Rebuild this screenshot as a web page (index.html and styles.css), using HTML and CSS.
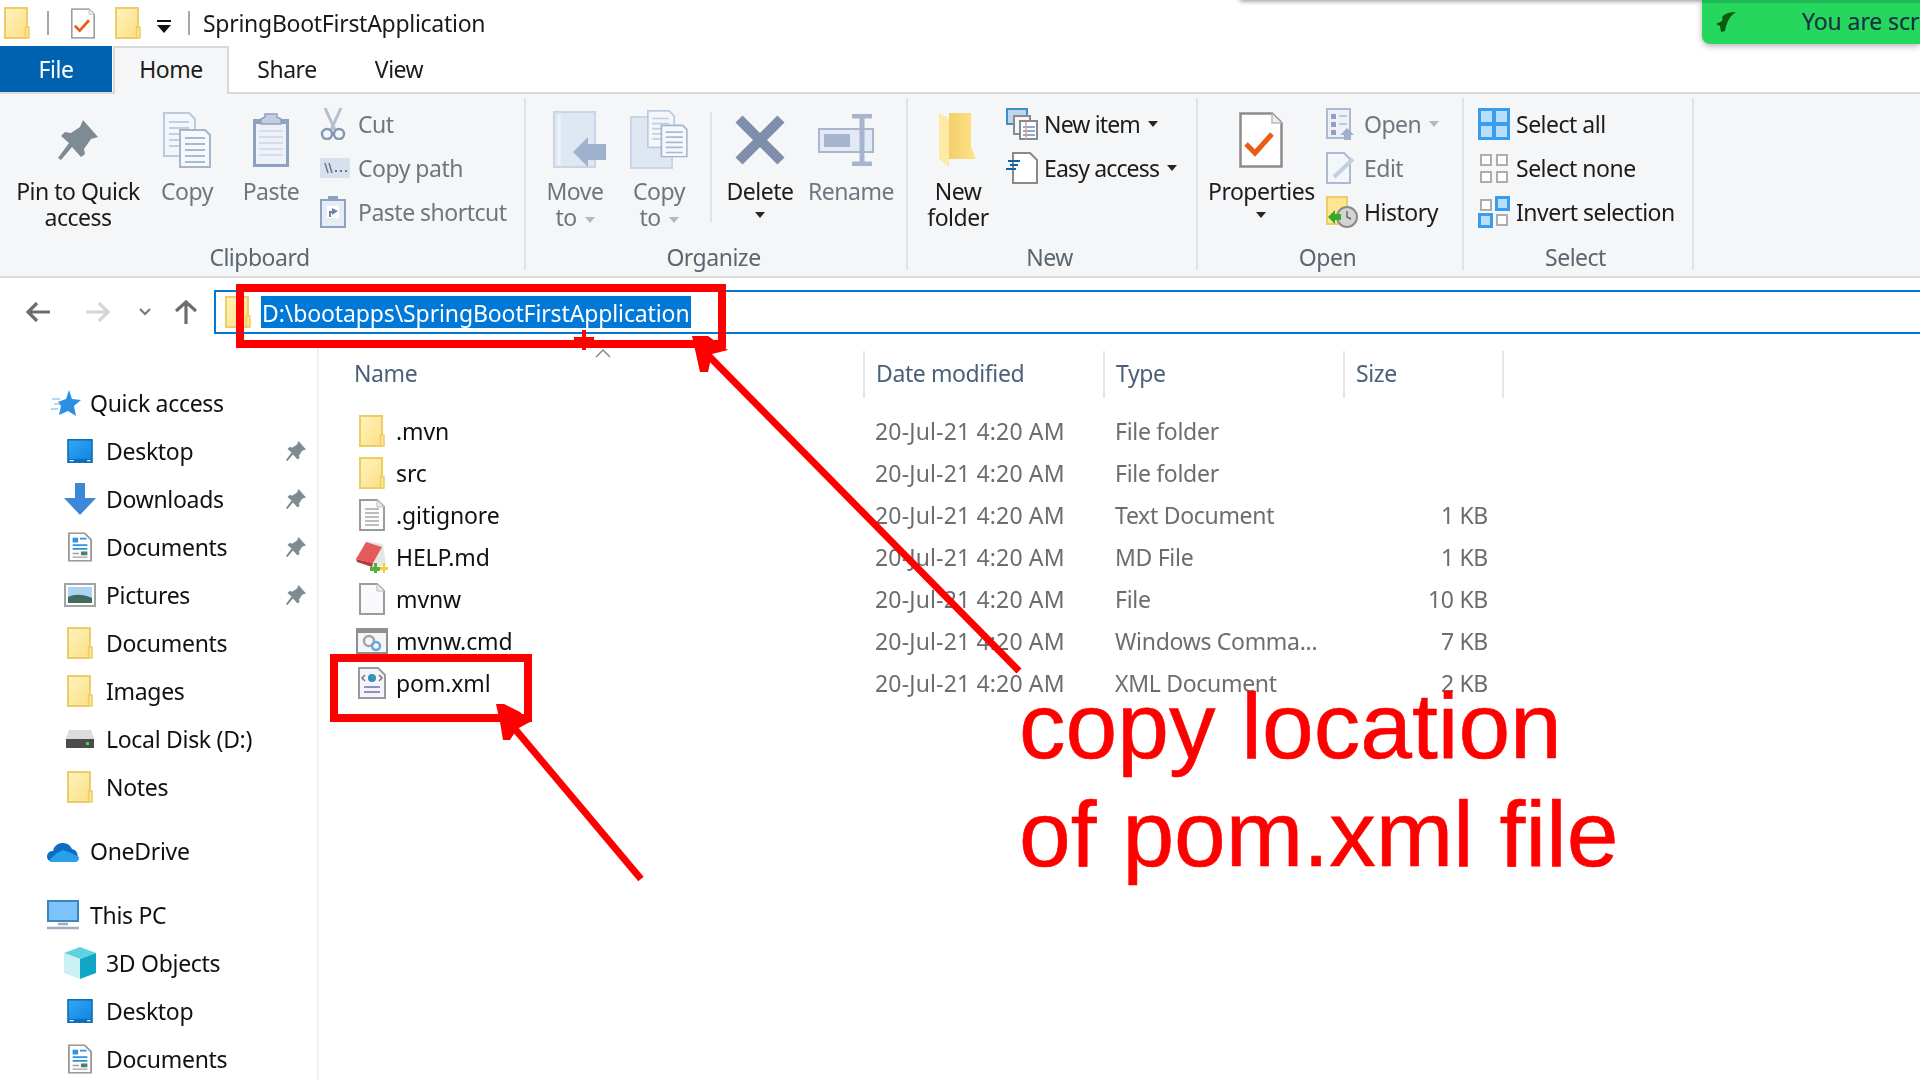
FILE: index.html
```html
<!DOCTYPE html>
<html lang="en">
<head>
<meta charset="utf-8">
<title>SpringBootFirstApplication</title>
<link rel="stylesheet" href="styles.css">
</head>
<body>
<svg class="defs" width="0" height="0" aria-hidden="true">
  <defs>
    <linearGradient id="fy" x1="0" y1="0" x2="1" y2="1"><stop offset="0" stop-color="#fff3bd"/><stop offset="1" stop-color="#fbdf84"/></linearGradient>
    <linearGradient id="fo" x1="0" y1="0" x2="1" y2="0"><stop offset="0" stop-color="#f3cf6b"/><stop offset="1" stop-color="#ffe28a"/></linearGradient>
    <linearGradient id="dk" x1="0" y1="0" x2="1" y2="1"><stop offset="0" stop-color="#35a5f5"/><stop offset="1" stop-color="#0f86e0"/></linearGradient>
    <symbol id="folder" viewBox="0 0 26 32"><rect x="1" y="1" width="22" height="30" fill="url(#fy)" stroke="#edcd66" stroke-width="2"/><rect x="21.5" y="20" width="3.5" height="11" fill="#fde592" stroke="#edcd66" stroke-width="1.5"/></symbol>
    <symbol id="pin" viewBox="0 0 40 40"><path d="M25 0L40 17 33 19 26 29 27 34 23 37 14 27 3 40 0 38 11 23 3 16 7 12 13 13 22 7Z" fill="#7e8b93"/></symbol>
    <symbol id="check" viewBox="0 0 44 56"><path d="M1.5 1.5H33L42.5 11V54.5H1.5Z" fill="#fff" stroke="#8c8c8c" stroke-width="2.5"/><path d="M33 1.5V11H42.5" fill="#eee" stroke="#bbb" stroke-width="1.5"/><path d="M7 32L16 41 33 22" fill="none" stroke="#ea5b14" stroke-width="5"/></symbol>
    <symbol id="pagelines" viewBox="0 0 26 32"><path d="M1 1H18L25 8V31H1Z" fill="#fdfdfd" stroke="#9b9b9b" stroke-width="2"/><path d="M18 1V8H25" fill="#eee" stroke="#bbb"/><path d="M6 10H20M6 14H20M6 18H20M6 22H20M6 26H20" stroke="#a8a8a8" stroke-width="1.5"/></symbol>
    <symbol id="blank" viewBox="0 0 26 32"><path d="M1 1H18L25 8V31H1Z" fill="#f8f9fb" stroke="#9b9b9b" stroke-width="2"/><path d="M18 1V8H25" fill="#eee" stroke="#bbb"/></symbol>
    <symbol id="docs" viewBox="0 0 26 32"><path d="M1 1H18L25 8V31H1Z" fill="#fdfdfd" stroke="#9b9b9b" stroke-width="2"/><path d="M5 6H11V11H5Z" fill="#2d95e5"/><path d="M13 7H20M5 14H21M5 18H21" stroke="#2d95e5" stroke-width="2"/><path d="M5 23H12M5 27H21" stroke="#a0a0a0" stroke-width="1.5"/><path d="M14 21H21V25H14Z" fill="#4f7f70"/></symbol>
    <symbol id="desktop" viewBox="0 0 32 30"><rect width="32" height="30" fill="#0d6fb8"/><rect x="2" y="2" width="28" height="23" fill="url(#dk)"/><path d="M3 27H8M25 27H29" stroke="#dff" stroke-width="1.5"/></symbol>
    <symbol id="copydocs" viewBox="0 0 48 56"><path d="M1 1H26L32 7V44H1Z" fill="#f3f6fa" stroke="#bccadd" stroke-width="2"/><path d="M6 10H26M6 16H26M6 22H26M6 28H26M6 34H26" stroke="#c2cfe0" stroke-width="2"/><path d="M17 18H42L47 23V55H17Z" fill="#f6f8fb" stroke="#a4b5cc" stroke-width="2"/><path d="M22 26H42M22 32H42M22 38H42M22 44H42M22 50H42" stroke="#a9b9cf" stroke-width="2"/></symbol>
    <symbol id="selpane" viewBox="0 0 32 32"><rect width="32" height="32" fill="#3a9ceb"/><path d="M3 3H14V14H3ZM18 3H29V14H18ZM3 18H14V29H3ZM18 18H29V29H18Z" fill="#b6dffe"/></symbol>
  </defs>
</svg>

<div class="app">
  <header class="titlebar">
    <svg class="tb-a" width="26" height="32"><use href="#folder"/></svg>
    <span class="tb-sep tb-b"></span>
    <svg class="tb-c" width="24" height="31" viewBox="0 0 44 56"><use href="#check" width="44" height="56"/></svg>
    <svg class="tb-d" width="26" height="32"><use href="#folder"/></svg>
    <svg class="tb-e" width="14" height="15" viewBox="0 0 14 15"><path d="M0 1H14V3H0ZM0 6H14L7 14Z" fill="#111"/></svg>
    <span class="tb-sep tb-f"></span>
    <span class="tb-title">SpringBootFirstApplication</span>
  </header>

  <nav class="tabs">
    <span class="tab tab-file">File</span>
    <span class="tab tab-home">Home</span>
    <span class="tab tab-share">Share</span>
    <span class="tab tab-view">View</span>
  </nav>

  <section class="ribbon">
    <div class="group g-clip">
      <div class="gbody">
        <div class="lg"><div class="lgi"><svg width="40" height="40"><use href="#pin"/></svg></div><span>Pin to Quick<br>access</span></div>
        <div class="lg dim"><div class="lgi"><svg width="48" height="56"><use href="#copydocs"/></svg></div><span>Copy</span></div>
        <div class="lg dim"><div class="lgi"><svg width="40" height="58" viewBox="0 0 40 58"><path d="M2 8H38V56H2Z" fill="#8ea2c0"/><path d="M5 13H35V53H5Z" fill="#eef2f8"/><path d="M8 20H32M8 26H32M8 32H32M8 38H32M8 44H32" stroke="#d3dcea" stroke-width="2"/><path d="M14 3H26V6L30 8V13H10V8L14 6Z" fill="#c2cde0" stroke="#8ea2c0" stroke-width="1.5"/></svg></div><span>Paste</span></div>
        <div class="col">
          <div class="sm dim"><span class="smi"><svg width="26" height="32" viewBox="0 0 26 32"><path d="M5 0L15 22M21 0L11 22" stroke="#b5bfcf" stroke-width="3"/><circle cx="7" cy="26" r="5" fill="none" stroke="#8497b5" stroke-width="2.5"/><circle cx="19" cy="26" r="5" fill="none" stroke="#8497b5" stroke-width="2.5"/></svg></span>Cut</div>
          <div class="sm dim"><span class="smi"><svg width="30" height="20" viewBox="0 0 30 20"><rect width="30" height="20" fill="#d8e0ec"/><path d="M5 5L8 15M9 5L12 15" stroke="#64789a" stroke-width="1.5"/><path d="M15 13H17M20 13H22M25 13H27" stroke="#64789a" stroke-width="2"/></svg></span>Copy path</div>
          <div class="sm dim"><span class="smi"><svg width="26" height="32" viewBox="0 0 26 32"><path d="M1 4H25V31H1Z" fill="#e7edf5" stroke="#8ea2c0" stroke-width="2"/><path d="M8 0H18V5H8Z" fill="#8ea2c0"/><path d="M7 10H19V22H7Z" fill="#fff"/><path d="M9 21V15H12V12L18 15 12 19V17H11V21Z" fill="#6e84a6"/></svg></span>Paste shortcut</div>
        </div>
      </div>
      <div class="glabel">Clipboard</div>
    </div>

    <div class="group g-org">
      <div class="gbody">
        <div class="lg dim"><div class="lgi"><svg class="shift" width="54" height="58" viewBox="0 0 54 58"><path d="M1 1H42V56H1Z" fill="#dfe7f3" stroke="#c9d6e8" stroke-width="2"/><path d="M6 4V54" stroke="#eef2f8" stroke-width="3"/><path d="M20 41L35 26V33H53V49H35V56Z" fill="#9eb1cd"/></svg></div><span>Move<br>to<i class="caret dimc"></i></span></div>
        <div class="lg dim"><div class="lgi"><svg width="58" height="60" viewBox="0 0 58 60"><path d="M1 7H42V58H1Z" fill="#dfe7f3" stroke="#c9d6e8" stroke-width="2"/><g transform="translate(17 0) scale(.85)"><use href="#copydocs" width="48" height="56"/></g></svg></div><span>Copy<br>to<i class="caret dimc"></i></span></div>
        <span class="vsep"></span>
        <div class="lg"><div class="lgi"><svg width="52" height="52" viewBox="0 0 52 52"><path d="M5 5L47 47M47 5L5 47" stroke="#7f8eab" stroke-width="10"/></svg></div><span>Delete<br><i class="caret solo"></i></span></div>
        <div class="lg dim"><div class="lgi"><svg class="shift-s" width="56" height="52" viewBox="0 0 56 52"><rect x="1" y="15" width="54" height="23" fill="#e3eaf5" stroke="#a7b7d0" stroke-width="2"/><rect x="6" y="20" width="26" height="13" fill="#a6b5cd"/><path d="M34 2H54M44 2V50M34 50H54" stroke="#a6b5cd" stroke-width="5"/></svg></div><span>Rename</span></div>
      </div>
      <div class="glabel">Organize</div>
    </div>

    <div class="group g-new">
      <div class="gbody">
        <div class="lg"><div class="lgi"><svg width="38" height="54" viewBox="0 0 38 54"><path d="M10 0H32V34L37 46H10Z" fill="url(#fo)"/><path d="M0 0L10 6V54L0 46Z" fill="#ffe9a6"/></svg></div><span>New<br>folder</span></div>
        <div class="col">
          <div class="sm"><span class="smi"><svg width="32" height="32" viewBox="0 0 32 32"><rect x="1" y="1" width="20" height="15" fill="#bcd6ee" stroke="#3f8fc6" stroke-width="2"/><path d="M8 8H24V26H8Z" fill="#f5f5f5" stroke="#8a8a8a" stroke-width="2"/><path d="M14 13H31V31H14Z" fill="#fff" stroke="#8a8a8a" stroke-width="2"/><path d="M17 19H29M17 23H29M17 27H29" stroke="#5b93c9" stroke-width="1.5"/><path d="M20 14V31" stroke="#e79a9a" stroke-width="1.5"/></svg></span>New item<i class="caret"></i></div>
          <div class="sm"><span class="smi"><svg width="32" height="32" viewBox="0 0 32 32"><path d="M7 1H24L31 8V31H7Z" fill="#fff" stroke="#8a8a8a" stroke-width="2"/><path d="M2 9H14M4 13H12M0 17H10" stroke="#0f63a8" stroke-width="2"/></svg></span>Easy access<i class="caret"></i></div>
        </div>
      </div>
      <div class="glabel">New</div>
    </div>

    <div class="group g-open">
      <div class="gbody">
        <div class="lg"><div class="lgi"><svg width="44" height="56"><use href="#check"/></svg></div><span>Properties<br><i class="caret solo"></i></span></div>
        <div class="col">
          <div class="sm dim"><span class="smi"><svg width="32" height="32" viewBox="0 0 32 32"><path d="M1 1H24V30H1Z" fill="#eef2f8" stroke="#adbbd2" stroke-width="2"/><path d="M5 6H10V11H5ZM5 14H10V19H5ZM5 22H10V27H5Z" fill="#8da1c0"/><path d="M13 8H21M13 16H21" stroke="#bcc9db" stroke-width="2"/><path d="M21 20L28 27H25V32H18V27H14Z" fill="#9fb0cb"/></svg></span>Open<i class="caret dimc"></i></div>
          <div class="sm dim"><span class="smi"><svg width="32" height="32" viewBox="0 0 32 32"><path d="M1 1H18L24 7V31H1Z" fill="#f3f6fb" stroke="#adbbd2" stroke-width="2"/><path d="M8 25L27 7" stroke="#c4cfdf" stroke-width="4"/></svg></span>Edit</div>
          <div class="sm"><span class="smi"><svg width="32" height="32" viewBox="0 0 32 32"><rect x="1" y="1" width="20" height="27" fill="#fde592" stroke="#edcd66" stroke-width="2"/><circle cx="21" cy="21" r="10" fill="#d4d4d4" stroke="#8a8a8a" stroke-width="2"/><path d="M21 15V21L25 23" stroke="#666" stroke-width="1.5" fill="none"/><path d="M2 21L9 14V18H15V24H9V28Z" fill="#35a82c"/></svg></span>History</div>
        </div>
      </div>
      <div class="glabel">Open</div>
    </div>

    <div class="group g-sel">
      <div class="gbody">
        <div class="col">
          <div class="sm"><span class="smi"><svg width="32" height="32"><use href="#selpane"/></svg></span>Select all</div>
          <div class="sm"><span class="smi"><svg width="32" height="32" viewBox="0 0 32 32"><path d="M3 3H13V13H3ZM19 3H29V13H19ZM3 20H13V30H3ZM19 20H29V30H19Z" fill="#fff" stroke="#adadad" stroke-width="2"/></svg></span>Select none</div>
          <div class="sm"><span class="smi"><svg width="32" height="32" viewBox="0 0 32 32"><path d="M3 4H13V14H3ZM19 19H29V29H19Z" fill="#fff" stroke="#adadad" stroke-width="2"/><path d="M17 0H32V15H17ZM0 17H15V32H0Z" fill="#3a9ceb"/><path d="M20 3H29V12H20ZM3 20H12V29H3Z" fill="#b6dffe"/></svg></span>Invert selection</div>
        </div>
      </div>
      <div class="glabel">Select</div>
    </div>
  </section>

  <div class="addrrow">
    <svg class="nv-back" width="24" height="20" viewBox="0 0 24 20"><path d="M11 1L2 10 11 19M2 10H24" fill="none" stroke="#6d6d6d" stroke-width="3.2"/></svg>
    <svg class="nv-fwd" width="24" height="20" viewBox="0 0 24 20"><path d="M13 1L22 10 13 19M22 10H0" fill="none" stroke="#d6d6d6" stroke-width="3.2"/></svg>
    <svg class="nv-drop" width="12" height="8" viewBox="0 0 12 8"><path d="M1 1L6 6 11 1" fill="none" stroke="#777" stroke-width="2"/></svg>
    <svg class="nv-up" width="24" height="24" viewBox="0 0 24 24"><path d="M2 11L12 2 22 11M12 2V24" fill="none" stroke="#6d6d6d" stroke-width="3.2"/></svg>
    <div class="addr">
      <svg width="26" height="32"><use href="#folder"/></svg>
      <span class="addr-sel">D:\bootapps\SpringBootFirstApplication</span>
    </div>
  </div>

  <main class="main">
    <aside class="side">
      <div class="nv root"><span class="nvi nvi-star"><svg width="30" height="26" viewBox="0 0 30 26"><path d="M18 0L21 9 30 10 23 16 25 26 17 21 8 25 10 16 7 12 15 9Z" fill="#2c90e2"/><path d="M1 9H9M3 14H9M0 19H7" stroke="#9ccbf1" stroke-width="1.5"/></svg></span>Quick access</div>
      <div class="nv"><span class="nvi"><svg width="32" height="24"><use href="#desktop" width="32" height="24"/></svg></span>Desktop<svg class="nvpin" width="20" height="20"><use href="#pin" width="20" height="20"/></svg></div>
      <div class="nv"><span class="nvi"><svg width="32" height="32" viewBox="0 0 32 32"><path d="M11 0H21V15H32L16 32 0 15H11Z" fill="#3b88d8"/></svg></span>Downloads<svg class="nvpin" width="20" height="20"><use href="#pin" width="20" height="20"/></svg></div>
      <div class="nv"><span class="nvi"><svg width="24" height="32" viewBox="0 0 26 32"><use href="#docs" width="26" height="32"/></svg></span>Documents<svg class="nvpin" width="20" height="20"><use href="#pin" width="20" height="20"/></svg></div>
      <div class="nv"><span class="nvi"><svg width="32" height="24" viewBox="0 0 32 24"><rect x="1" y="1" width="30" height="22" fill="#fff" stroke="#a3a3a3" stroke-width="2"/><rect x="4" y="4" width="24" height="16" fill="#a9d4f2"/><path d="M4 14Q14 9 28 15V20H4Z" fill="#3e6b5b"/></svg></span>Pictures<svg class="nvpin" width="20" height="20"><use href="#pin" width="20" height="20"/></svg></div>
      <div class="nv"><span class="nvi"><svg width="26" height="32"><use href="#folder"/></svg></span>Documents</div>
      <div class="nv"><span class="nvi"><svg width="26" height="32"><use href="#folder"/></svg></span>Images</div>
      <div class="nv"><span class="nvi"><svg width="28" height="18" viewBox="0 0 28 18"><path d="M3 0H25L28 8V18H0V8Z" fill="#dcdcdc"/><rect y="9" width="28" height="9" fill="#4b4b4b"/><rect x="20" y="12" width="3" height="3" fill="#4fd04f"/></svg></span>Local Disk (D:)</div>
      <div class="nv"><span class="nvi"><svg width="26" height="32"><use href="#folder"/></svg></span>Notes</div>
      <div class="nv root gap"><span class="nvi"><svg width="32" height="22" viewBox="0 0 32 22"><path d="M6 11A10 10 0 0 1 25 9 7 7 0 0 1 27 22H5A5.500 5.500 0 0 1 6 11Z" fill="#0f6cc4"/><path d="M2 20L10 13 16 10 24 13 32 17V18A4 4 0 0 1 27 22H5A5 5 0 0 1 2 20Z" fill="#28a0ea"/></svg></span>OneDrive</div>
      <div class="nv root gap"><span class="nvi"><svg width="32" height="30" viewBox="0 0 32 30"><rect x="1" y="1" width="30" height="20" fill="#7cc3fb" stroke="#3d87b8" stroke-width="2"/><path d="M11 24H21M0 28H32" stroke="#9fadbe" stroke-width="2.500"/></svg></span>This PC</div>
      <div class="nv"><span class="nvi"><svg width="32" height="32" viewBox="0 0 32 32"><path d="M16 0L32 6 16 12 0 6Z" fill="#5cd3e0"/><path d="M0 6L16 12V32L0 26Z" fill="#c9f0f2"/><path d="M32 6L16 12V32L32 26Z" fill="#12a6c6"/></svg></span>3D Objects</div>
      <div class="nv"><span class="nvi"><svg width="32" height="24"><use href="#desktop" width="32" height="24"/></svg></span>Desktop</div>
      <div class="nv"><span class="nvi"><svg width="24" height="32" viewBox="0 0 26 32"><use href="#docs" width="26" height="32"/></svg></span>Documents</div>
    </aside>

    <section class="files">
      <div class="fhead">
        <span class="fh fh-name">Name</span>
        <span class="fh">Date modified</span>
        <span class="fh">Type</span>
        <span class="fh fh-last">Size</span>
      </div>
      <div class="frows">
        <div class="fr"><span class="fn"><span class="fi"><svg width="26" height="32"><use href="#folder"/></svg></span>.mvn</span><span class="fd fdate">20-Jul-21 4:20 AM</span><span class="fd">File folder</span><span class="fs"></span></div>
        <div class="fr"><span class="fn"><span class="fi"><svg width="26" height="32"><use href="#folder"/></svg></span>src</span><span class="fd fdate">20-Jul-21 4:20 AM</span><span class="fd">File folder</span><span class="fs"></span></div>
        <div class="fr"><span class="fn"><span class="fi"><svg width="26" height="32"><use href="#pagelines"/></svg></span>.gitignore</span><span class="fd fdate">20-Jul-21 4:20 AM</span><span class="fd">Text Document</span><span class="fs">1 KB</span></div>
        <div class="fr"><span class="fn"><span class="fi"><svg width="32" height="32" viewBox="0 0 32 32"><path d="M11 0L27 3 30 24 16 26Z" fill="#e6e6e6"/><path d="M0 18L10 1 26 6 17 22Z" fill="#e45a5a"/><path d="M0 18L17 22 16 26 1 21Z" fill="#b53a3a"/><path d="M14 26H18V22H21V26H24V30H21V32H18V30H14Z" fill="#4fb33b"/><path d="M24 26H27V22H29V26H32V29H29V32H27V29H24Z" fill="#f1cf35"/></svg></span>HELP.md</span><span class="fd fdate">20-Jul-21 4:20 AM</span><span class="fd">MD File</span><span class="fs">1 KB</span></div>
        <div class="fr"><span class="fn"><span class="fi"><svg width="26" height="32"><use href="#blank"/></svg></span>mvnw</span><span class="fd fdate">20-Jul-21 4:20 AM</span><span class="fd">File</span><span class="fs">10 KB</span></div>
        <div class="fr"><span class="fn"><span class="fi"><svg width="32" height="26" viewBox="0 0 32 26"><rect x="1" y="1" width="30" height="24" fill="#f4f6f8" stroke="#8f8f8f" stroke-width="2"/><path d="M1 1H31V5H1Z" fill="#8f8f8f"/><circle cx="13" cy="13" r="5" fill="none" stroke="#9fa6b0" stroke-width="2.500"/><circle cx="20" cy="18" r="4" fill="none" stroke="#6da6d6" stroke-width="2.500"/></svg></span>mvnw.cmd</span><span class="fd fdate">20-Jul-21 4:20 AM</span><span class="fd">Windows Comma...</span><span class="fs">7 KB</span></div>
        <div class="fr"><span class="fn"><span class="fi"><svg width="28" height="32" viewBox="0 0 28 32"><path d="M1 1H20L27 8V31H1Z" fill="#f4f4fa" stroke="#9b9b9b" stroke-width="2"/><circle cx="14" cy="11" r="4" fill="#2f8fc4"/><circle cx="15" cy="10" r="1.500" fill="#4cae4c"/><path d="M7 8L4 11 7 14M21 8L24 11 21 14" fill="none" stroke="#777" stroke-width="1.500"/><path d="M6 20H22M6 25H22" stroke="#8f8fc0" stroke-width="2"/></svg></span>pom.xml</span><span class="fd fdate">20-Jul-21 4:20 AM</span><span class="fd">XML Document</span><span class="fs">2 KB</span></div>
      </div>
    </section>
  </main>
</div>

<div class="topshade"></div>
<div class="toast">
  <svg width="20" height="20" viewBox="0 0 20 20"><path d="M20 0Q10 0 6 5 7 7 6 9L0 12 4 14 5 20 9 19Q10 13 12 9 15 3 20 0Z" fill="#0a5c10"/></svg>
  <span>You are screen sharing</span>
</div>

<svg class="marks" width="1920" height="1080" viewBox="0 0 1920 1080" aria-hidden="true">
  <g fill="none" stroke="#ff0000">
    <rect x="240" y="288" width="482" height="56" stroke-width="8"/>
    <rect x="334" y="658" width="194" height="60" stroke-width="8"/>
    <path d="M1019 671L700 347" stroke-width="7"/>
    <path d="M641 879L504 716" stroke-width="7"/>
    <path d="M584 330V350M574 339H594" stroke-width="4"/>
  </g>
  <path d="M692 336H708L728 350 712 354 708 372H700L694 345Z" fill="#ff0000"/>
  <path d="M496 704H504L520 712 530 722 517 729 510 740H503L500 722Z" fill="#ff0000"/>
  <path d="M596 357L603 350 610 357" fill="none" stroke="#8a8a8a" stroke-width="1.500"/>
</svg>
<div class="note">copy location<br>of pom.xml file</div>
</body>
</html>
```

FILE: styles.css
```css
* { box-sizing: border-box; }
html, body { margin: 0; height: 100%; }
body {
  position: relative;
  width: 1920px;
  height: 1080px;
  overflow: hidden;
  background: #fff;
  font-family: "Noto Sans", "Liberation Sans", sans-serif;
  font-size: 23px;
  letter-spacing: -0.5px;
  color: #1c1c1c;
}
.defs { position: absolute; }
svg { display: block; flex: none; }

.app { display: flex; flex-direction: column; height: 1080px; filter: blur(0.35px); }

/* title bar */
.titlebar { height: 46px; display: flex; align-items: center; padding-left: 4px; flex: none; }
.tb-sep { width: 2px; height: 24px; background: #a8a8a8; }
.tb-b { margin-left: 17px; }
.tb-c { margin-left: 22px; }
.tb-d { margin-left: 20px; }
.tb-e { margin-left: 16px; margin-top: 6px; }
.tb-f { margin-left: 17px; }
.tb-title { margin-left: 13px; color: #1a1a1a; letter-spacing: -0.28px; }

/* tabs */
.tabs { height: 46px; display: flex; flex: none; align-items: stretch; }
.tab { display: flex; align-items: center; justify-content: center; }
.tab-file { width: 112px; background: #0063b1; color: #fff; }
.tab-home { width: 116px; margin-left: 1px; background: #f5f6f7; border: 2px solid #d9d9d9; border-bottom: 0; margin-bottom: -2px; padding-bottom: 4px; position: relative; z-index: 1; }
.tab-share { width: 116px; }
.tab-view { width: 108px; }

/* ribbon */
.ribbon { height: 186px; flex: none; display: flex; padding: 4px 0 6px; background: #f5f6f7; border-top: 2px solid #d9d9d9; border-bottom: 2px solid #dcdcdc; }
.group { display: flex; flex-direction: column; justify-content: space-between; border-right: 2px solid #e1e3e6; flex: none; height: 172px; }
.g-clip { width: 526px; }
.g-org { width: 382px; }
.g-new { width: 290px; }
.g-open { width: 266px; }
.g-sel { width: 230px; }
.g-clip .gbody { padding-left: 8px; }
.g-org .gbody { padding-left: 16px; }
.g-new .gbody { padding-left: 12px; }
.g-open .gbody { padding-left: 10px; }
.g-sel .gbody { padding-left: 14px; }
.gbody { display: grid; padding-top: 4px; align-items: start; }
.g-clip .gbody { grid-template-columns: 140px 78px 90px auto; }
.g-org .gbody { grid-template-columns: 66px 102px 2px 96px 68px; }
.g-new .gbody { grid-template-columns: 76px auto; }
.g-open .gbody { grid-template-columns: 106px auto; }
.g-sel .gbody { grid-template-columns: auto; }
.g-org .gbody > .vsep { width: 2px; height: 110px; background: #e1e3e6; margin-top: 10px; }
.lg { text-align: center; line-height: 26px; white-space: nowrap; }
.lgi { height: 76px; display: flex; align-items: center; justify-content: center; }
.shift { margin-left: 10px; }
.shift-s { margin-left: 8px; }
.dim { color: #6e7680; }
.glabel { height: 26px; line-height: 26px; text-align: center; padding-right: 5px; color: #5a6670; }
.col { display: flex; flex-direction: column; padding-left: 4px; }
.g-new .col { padding-left: 10px; letter-spacing: -0.85px; }
.g-open .col { padding-left: 12px; }
.g-sel .col { padding-left: 0; }
.sm { height: 44px; display: flex; align-items: center; white-space: nowrap; }
.smi { width: 38px; flex: none; display: flex; align-items: center; justify-content: flex-start; }
.caret { display: inline-block; width: 0; height: 0; margin-left: 8px; border: 5px solid transparent; border-top: 6px solid #262626; border-bottom: 0; vertical-align: middle; }
.dimc { border-top-color: #b4b8bd; }
.solo { margin-left: 0; vertical-align: top; margin-top: 8px; }

/* address row */
.addrrow { height: 62px; flex: none; display: flex; align-items: center; padding: 6px 0 0 26px; position: relative; }
.nv-fwd { margin-left: 36px; }
.nv-drop { margin-left: 29px; }
.nv-up { margin-left: 23px; }
.addr { margin-left: 16px; flex: 1; margin-right: -4px; height: 44px; border: 2px solid #0078d7; display: flex; align-items: center; padding-left: 9px; }
.addr-sel { margin-left: 10px; background: #0078d7; color: #fff; height: 32px; line-height: 34px; padding: 0 1px; letter-spacing: -0.12px; }

/* main */
.main { flex: 1; min-height: 0; display: flex; overflow: hidden; }
.side { width: 319px; flex: none; border-right: 2px solid #f0f0f0; padding-top: 39px; letter-spacing: -0.3px; }
.nv { height: 48px; display: flex; align-items: center; padding-left: 60px; padding-right: 11px; color: #111; }
.nv.root { padding-left: 47px; }
.nv.gap { margin-top: 16px; }
.nvi { width: 46px; flex: none; display: flex; justify-content: center; padding: 0 10px 0 4px; }
.nv.root .nvi { width: 43px; padding: 0; justify-content: flex-start; }
.nv.root .nvi-star { padding-left: 4px; }
.nvpin { margin-left: auto; }

.files { flex: 1; padding-top: 11px; letter-spacing: -0.3px; }
.fhead { display: grid; grid-template-columns: 544px 240px 240px 161px; height: 47px; width: 1185px; }
.fh { display: flex; align-items: center; padding: 0 0 3px 11px; border-left: 2px solid #e6e6e6; color: #4c607a; letter-spacing: -0.4px; }
.fh-name { padding-left: 35px; border-left: 0; }
.fh-last { border-right: 2px solid #e6e6e6; }
.frows { margin-top: 12px; }
.fr { display: grid; grid-template-columns: 544px 240px 240px 145px; height: 42px; align-items: center; }
.fn { display: flex; align-items: center; padding-left: 36px; color: #111; letter-spacing: -0.12px; }
.fi { width: 41px; flex: none; display: flex; justify-content: center; padding-right: 7px; }
.fd { padding-left: 12px; color: #6d6d6d; white-space: nowrap; }
.fdate { letter-spacing: 0.16px; }
.fs { text-align: right; color: #6d6d6d; }

/* overlays */
.topshade { position: absolute; left: 1240px; top: -12px; width: 470px; height: 12px; box-shadow: 0 1px 5px rgba(0,0,0,.45); }
.toast { position: absolute; left: 1702px; top: 0; width: 218px; height: 44px; overflow: hidden; background: #25d85d; border-top: 3px solid #1fb855; border-bottom-left-radius: 8px; box-shadow: 0 2px 6px rgba(0,0,0,.3); display: flex; align-items: center; padding-left: 14px; color: #1c2f45; white-space: nowrap; }
.toast svg { margin-bottom: 3px; }
.toast span { margin: 0 0 6px 66px; font-size: 23px; letter-spacing: -0.1px; -webkit-text-stroke: 0.2px #1c2f45; }
.marks { position: absolute; left: 0; top: 0; }
.note { position: absolute; left: 1019px; top: 672px; font-family: "Liberation Sans", Arial, sans-serif; font-size: 93px; line-height: 108px; letter-spacing: 0; color: #ff0000; -webkit-text-stroke: 0.6px #ff0000; white-space: nowrap; }
```
